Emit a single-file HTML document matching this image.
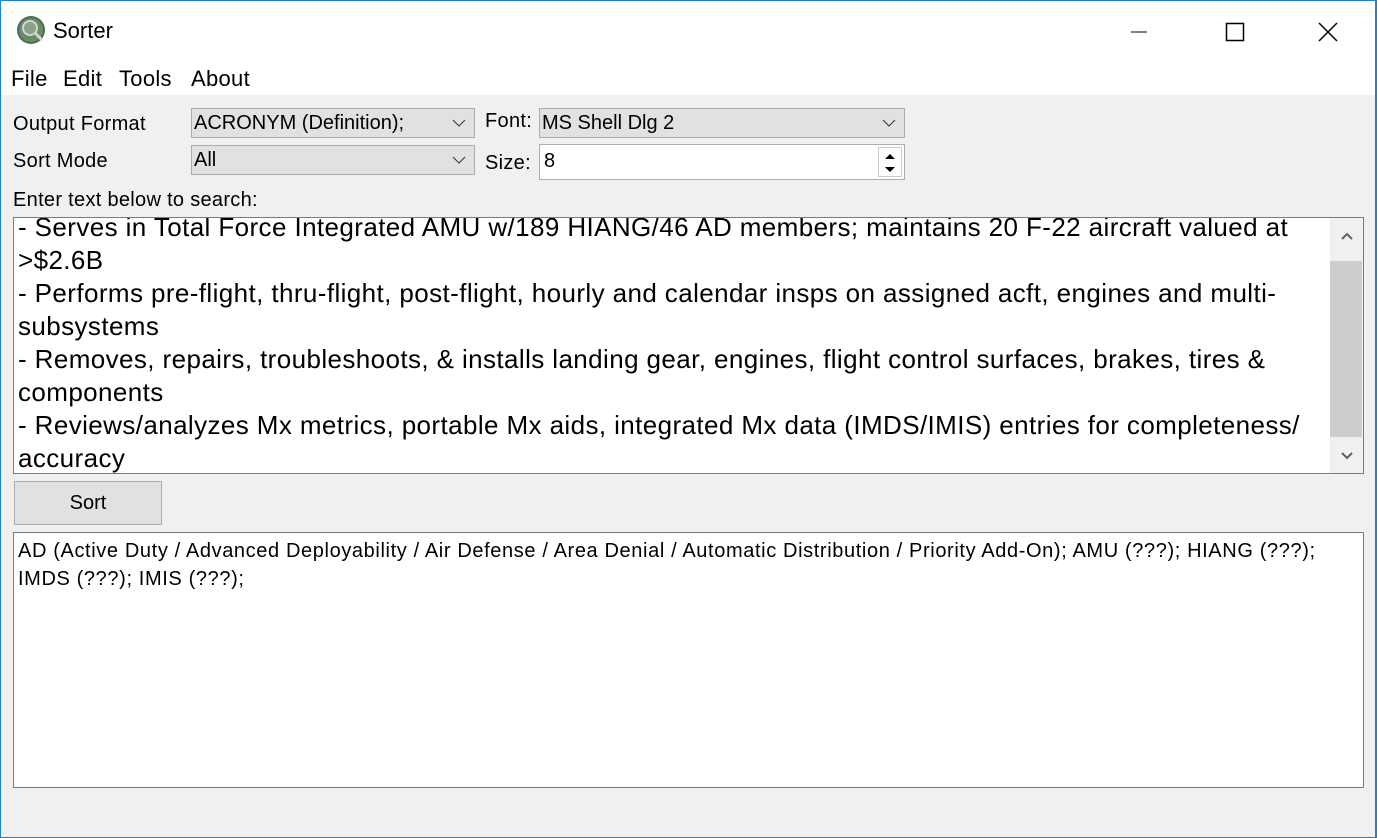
<!DOCTYPE html>
<html><head><style>
*{margin:0;padding:0;box-sizing:border-box}
body{width:1377px;height:838px;background:#f0f0f0;font-family:"Liberation Sans",sans-serif;position:relative;overflow:hidden;color:#000}
.frame{position:absolute;left:0;top:0;width:1377px;height:838px;border:1px solid #1883d7;border-right-width:2px}
.title{position:absolute;left:1px;top:1px;width:1374px;height:60px;background:#fff}
.menu{position:absolute;left:1px;top:61px;width:1374px;height:34px;background:#fff;font-size:22px;letter-spacing:0.3px}
.menu span{position:absolute;top:5px}
.lbl{position:absolute;font-size:20px;letter-spacing:0.3px}
.combo{position:absolute;background:#e1e1e1;border:1px solid #adadad;font-size:20px;padding-left:2px;line-height:28px}
.combo svg{position:absolute;right:8px;top:10px}
.box{position:absolute;background:#fff;border:1px solid #7a7a7a;overflow:hidden}
.big div{white-space:nowrap}
</style></head><body>
<div class="title">
<svg style="position:absolute;left:15px;top:14px" width="32" height="32" viewBox="0 0 32 32"><circle cx="15" cy="15" r="14" fill="#4f6e4f"/><circle cx="15" cy="15" r="12" fill="#6a8a6a"/><circle cx="14" cy="13" r="7" fill="#8aa08a" stroke="#d0d8d0" stroke-width="2"/><line x1="19" y1="18" x2="26" y2="25" stroke="#d0d8d0" stroke-width="3"/></svg>
<div style="position:absolute;left:52px;top:17px;font-size:22px">Sorter</div>
<svg style="position:absolute;left:1130px;top:20px" width="220" height="22"><line x1="0" y1="11" x2="16" y2="11" stroke="#000"/><rect x="95.5" y="2.5" width="17" height="17" fill="none" stroke="#000" stroke-width="1.5"/><line x1="188" y1="2" x2="206" y2="20" stroke="#000" stroke-width="1.5"/><line x1="206" y1="2" x2="188" y2="20" stroke="#000" stroke-width="1.5"/></svg>
</div>
<div class="menu"><span style="left:10px">File</span><span style="left:62px">Edit</span><span style="left:118px">Tools</span><span style="left:190px">About</span></div>
<div class="lbl" style="left:13px;top:113px">Output Format</div>
<div class="lbl" style="left:13px;top:150px">Sort Mode</div>
<div class="lbl" style="left:13px;top:189px">Enter text below to search:</div>
<div class="combo" style="left:191px;top:108px;width:284px;height:30px">ACRONYM (Definition);<svg width="14" height="8"><path d="M1 1l6 6 6-6" fill="none" stroke="#333"/></svg></div>
<div class="combo" style="left:191px;top:145px;width:284px;height:30px">All<svg width="14" height="8"><path d="M1 1l6 6 6-6" fill="none" stroke="#333"/></svg></div>
<div class="lbl" style="left:485px;top:110px">Font:</div>
<div class="lbl" style="left:485px;top:152px">Size:</div>
<div class="combo" style="left:539px;top:108px;width:366px;height:30px">MS Shell Dlg 2<svg width="14" height="8"><path d="M1 1l6 6 6-6" fill="none" stroke="#333"/></svg></div>
<div class="box" style="left:539px;top:144px;width:366px;height:36px;border-color:#adadad;font-size:20px;padding:5px 4px">8
<div style="position:absolute;right:2px;top:2px;width:24px;height:30px;border:1px solid #ccc;background:#fdfdfd"></div>
<svg style="position:absolute;right:8px;top:6px" width="12" height="24"><path d="M1 8l5-5 5 5z M1 16l5 5 5-5z" fill="#000"/></svg></div>
<div class="box" style="left:13px;top:217px;width:1351px;height:257px">
<div class="big" style="position:absolute;left:4px;top:-7px;font-size:26px;line-height:33px;letter-spacing:0.4px">
<div>- Serves in Total Force Integrated AMU w/189 HIANG/46 AD members; maintains 20 F-22 aircraft valued at</div>
<div>&gt;$2.6B</div>
<div>- Performs pre-flight, thru-flight, post-flight, hourly and calendar insps on assigned acft, engines and multi-</div>
<div>subsystems</div>
<div>- Removes, repairs, troubleshoots, &amp; installs landing gear, engines, flight control surfaces, brakes, tires &amp;</div>
<div>components</div>
<div>- Reviews/analyzes Mx metrics, portable Mx aids, integrated Mx data (IMDS/IMIS) entries for completeness/</div>
<div>accuracy</div>
</div>
<div style="position:absolute;right:0;top:0;width:33px;height:255px;background:#f0f0f0"></div>
<div style="position:absolute;right:1px;top:43px;width:32px;height:176px;background:#cdcdcd"></div>
<svg style="position:absolute;right:10px;top:14px" width="12" height="8"><path d="M1 7l5-5 5 5" fill="none" stroke="#606060" stroke-width="2"/></svg>
<svg style="position:absolute;right:10px;top:234px" width="12" height="8"><path d="M1 1l5 5 5-5" fill="none" stroke="#606060" stroke-width="2"/></svg>
</div>
<div style="position:absolute;left:14px;top:481px;width:148px;height:44px;background:#e1e1e1;border:1px solid #adadad;font-size:20px;text-align:center;line-height:42px">Sort</div>
<div class="box" style="left:13px;top:532px;width:1351px;height:256px">
<div style="position:absolute;left:4px;top:4px;white-space:nowrap;font-size:20px;line-height:28px;letter-spacing:0.62px">AD (Active Duty / Advanced Deployability / Air Defense / Area Denial / Automatic Distribution / Priority Add-On); AMU (???); HIANG (???);<br>IMDS (???); IMIS (???);</div>
</div>
<div class="frame"></div>
</body></html>
